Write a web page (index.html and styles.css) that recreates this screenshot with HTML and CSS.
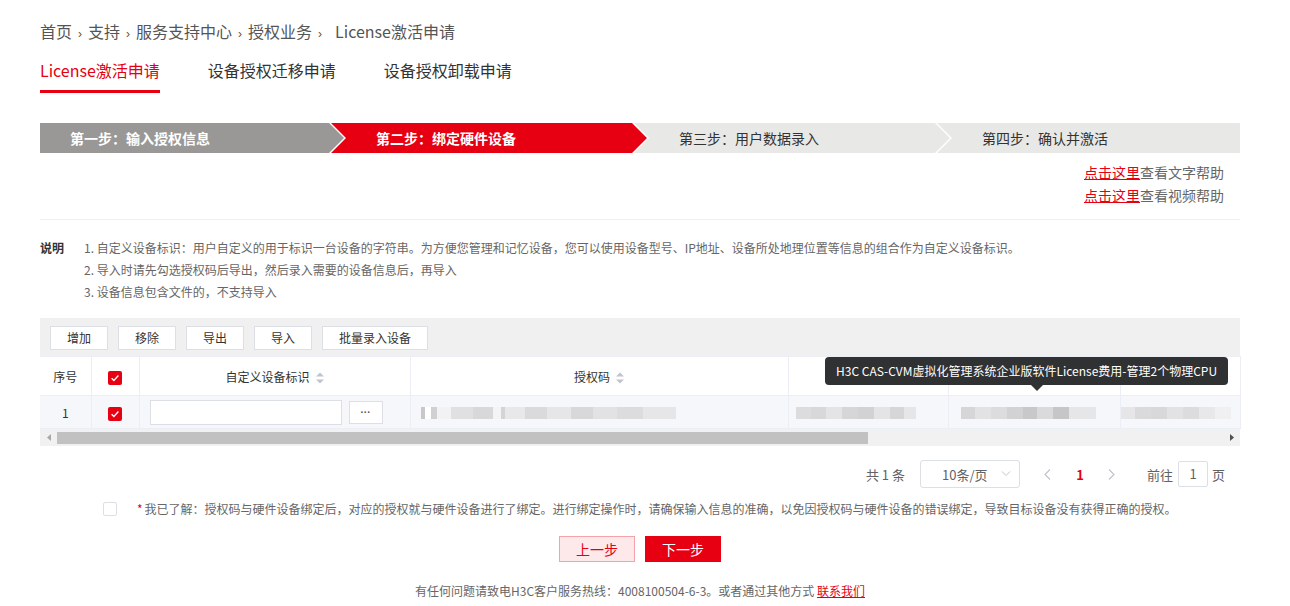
FILE: index.html
```html
<!DOCTYPE html>
<html lang="zh-CN">
<head>
    <meta charset="UTF-8">
    <title>License激活申请</title>
    <link rel="stylesheet" href="styles.css">
</head>
<body>
    <div class="page">
        <div class="crumbs">
            <a href="#">首页</a><span class="sep">›</span><a href="#">支持</a><span class="sep">›</span><a href="#">服务支持中心</a><span class="sep">›</span><a href="#">授权业务</a><span class="sep last">›</span><span>License激活申请</span>
        </div>

        <div class="tabs">
            <a class="tab active" href="#">License激活申请</a>
            <a class="tab" href="#">设备授权迁移申请</a>
            <a class="tab" href="#">设备授权卸载申请</a>
        </div>

        <div class="steps">
            <div class="step done">第一步：输入授权信息</div>
            <div class="step current">第二步：绑定硬件设备</div>
            <div class="step">第三步：用户数据录入</div>
            <div class="step">第四步：确认并激活</div>
        </div>

        <div class="help">
            <div><a href="#">点击这里</a>查看文字帮助</div>
            <div><a href="#">点击这里</a>查看视频帮助</div>
        </div>

        <div class="notes">
            <div class="notes-label">说明</div>
            <div class="notes-list">
                <div>1. 自定义设备标识：用户自定义的用于标识一台设备的字符串。为方便您管理和记忆设备，您可以使用设备型号、IP地址、设备所处地理位置等信息的组合作为自定义设备标识。</div>
                <div>2. 导入时请先勾选授权码后导出，然后录入需要的设备信息后，再导入</div>
                <div>3. 设备信息包含文件的，不支持导入</div>
            </div>
        </div>

        <div class="grid">
            <div class="toolbar">
                <button>增加</button>
                <button>移除</button>
                <button>导出</button>
                <button>导入</button>
                <button>批量录入设备</button>
            </div>

            <table class="table">
                <colgroup>
                    <col class="c-no">
                    <col class="c-check">
                    <col class="c-name">
                    <col class="c-code">
                    <col class="c-5">
                    <col class="c-6">
                    <col class="c-7">
                </colgroup>
                <thead>
                    <tr>
                        <th>序号</th>
                        <th><span class="check on"><svg viewBox="0 0 14 14" width="14" height="14"><path d="M3.6 7.2l2.3 2.3 4.5-5" fill="none" stroke="#fff" stroke-width="1.3"/></svg></span></th>
                        <th>自定义设备标识<span class="sort"><svg width="8" height="12" viewBox="0 0 8 12"><path d="M4 0.5L8 4.5H0z M4 11.5L8 7.5H0z" fill="#c0c4cc"/></svg></span></th>
                        <th>授权码<span class="sort"><svg width="8" height="12" viewBox="0 0 8 12"><path d="M4 0.5L8 4.5H0z M4 11.5L8 7.5H0z" fill="#c0c4cc"/></svg></span></th>
                        <th></th>
                        <th></th>
                        <th></th>
                    </tr>
                </thead>
                <tbody>
                    <tr>
                        <td class="center">1</td>
                        <td class="center"><span class="check on"><svg viewBox="0 0 14 14" width="14" height="14"><path d="M3.6 7.2l2.3 2.3 4.5-5" fill="none" stroke="#fff" stroke-width="1.3"/></svg></span></td>
                        <td class="name-cell"><input class="name-input" type="text"><button class="more">···</button></td>
                        <td><div class="mosaic m-code"></div></td>
                        <td><div class="mosaic m-a"></div></td>
                        <td><div class="mosaic m-b"></div></td>
                        <td class="flush"><div class="mosaic m-c"></div></td>
                    </tr>
                </tbody>
            </table>

            <div class="hscroll">
                <span class="sb-arrow left"><svg width="4" height="7" viewBox="0 0 4 7"><path d="M4 0V7L0 3.5z" fill="#a8a8a8"/></svg></span>
                <div class="sb-track"><div class="sb-thumb"></div></div>
                <span class="sb-arrow right"><svg width="4" height="7" viewBox="0 0 4 7"><path d="M0 0V7L4 3.5z" fill="#505050"/></svg></span>
            </div>

            <div class="tip">H3C CAS-CVM虚拟化管理系统企业版软件License费用-管理2个物理CPU</div>
        </div>

        <div class="pager">
            <span class="total">共 1 条</span>
            <div class="size">
                <span>10条/页</span>
                <svg width="10" height="6" viewBox="0 0 10 6"><path d="M1 0.5l4 4 4-4" fill="none" stroke="#c0c4cc" stroke-width="1"/></svg>
            </div>
            <span class="pg-btn prev"><svg width="7" height="11" viewBox="0 0 7 11"><path d="M6 0.5l-5 5 5 5" fill="none" stroke="#c0c4cc" stroke-width="1.2"/></svg></span>
            <span class="pg-btn pg-num">1</span>
            <span class="pg-btn"><svg width="7" height="11" viewBox="0 0 7 11"><path d="M1 0.5l5 5-5 5" fill="none" stroke="#c0c4cc" stroke-width="1.2"/></svg></span>
            <span class="goto">前往</span>
            <span class="pg-input">1</span>
            <span class="goto-end">页</span>
        </div>

        <div class="agree">
            <span class="box"></span>
            <span class="star">*</span>
            <span>我已了解：授权码与硬件设备绑定后，对应的授权就与硬件设备进行了绑定。进行绑定操作时，请确保输入信息的准确，以免因授权码与硬件设备的错误绑定，导致目标设备没有获得正确的授权。</span>
        </div>

        <div class="actions">
            <button class="btn btn-prev">上一步</button>
            <button class="btn btn-next">下一步</button>
        </div>

        <div class="footer">
            有任何问题请致电H3C客户服务热线：4008100504-6-3。或者通过其他方式 <a href="#">联系我们</a>
        </div>
    </div>
</body>
</html>
```

FILE: styles.css
```css
* {
    box-sizing: border-box;
}
body {
    margin: 0;
    font-family: "Noto Sans CJK SC", "Microsoft YaHei", sans-serif;
    color: #333;
    background: #fff;
}
a {
    color: inherit;
    text-decoration: none;
}
.page {
    width: 1200px;
    margin-left: 40px;
    padding-top: 19px;
}

/* breadcrumb + tabs */
.crumbs {
    height: 24px;
    font-size: 16px;
    line-height: 24px;
    color: #555;
}
.crumbs .sep {
    font-family: "Liberation Sans", sans-serif;
    font-size: 12px;
    line-height: 1;
    margin: 0 6px;
}
.crumbs .sep.last {
    margin-right: 13px;
}
.tabs {
    display: flex;
    gap: 48px;
    margin-top: 15px;
}
.tab {
    font-size: 16px;
    line-height: 24px;
    padding-bottom: 8px;
    border-bottom: 3px solid transparent;
    color: #333;
}
.tab.active {
    color: #e60012;
    border-bottom-color: #e60012;
}

/* steps */
.steps {
    display: flex;
    height: 30px;
    margin-top: 30px;
}
.step {
    flex: none;
    width: 316px;
    height: 30px;
    margin-left: -13px;
    padding-left: 45px;
    font-size: 14px;
    line-height: 30px;
    color: #333;
    background: #e8e8e6;
    clip-path: polygon(0 0, calc(100% - 15px) 0, 100% 50%, calc(100% - 15px) 100%, 0 100%, 15px 50%);
}
.step:first-child {
    width: 304px;
    margin-left: 0;
    padding-left: 30px;
    clip-path: polygon(0 0, calc(100% - 15px) 0, 100% 50%, calc(100% - 15px) 100%, 0 100%);
}
.step:last-child {
    flex: 1;
    clip-path: polygon(0 0, 100% 0, 100% 100%, 0 100%, 15px 50%);
}
.step.done {
    background: #999896;
    color: #fff;
    font-weight: bold;
}
.step.current {
    background: #e60012;
    color: #fff;
    font-weight: bold;
}

/* help */
.help {
    margin-top: 8px;
    padding: 0 16px 12px 0;
    border-bottom: 1px solid #eee;
    text-align: right;
    font-size: 14px;
    line-height: 23px;
    color: #666;
}
.help a {
    color: #e60012;
    text-decoration: underline;
}

/* notes */
.notes {
    display: flex;
    padding-top: 17px;
    font-size: 12px;
    line-height: 22px;
}
.notes-label {
    width: 44px;
    font-weight: bold;
    color: #333;
}
.notes-list {
    color: #666;
}

/* grid */
.grid {
    position: relative;
    margin-top: 15px;
}
.toolbar {
    display: flex;
    gap: 10px;
    padding: 8px 10px 6px;
    background: #f0f0f0;
}
.toolbar button {
    height: 24px;
    padding: 0 16px;
    font-family: inherit;
    font-size: 12px;
    line-height: 22px;
    color: #333;
    background: #fff;
    border: 1px solid #dcdfe6;
}
.table {
    width: 100%;
    border-collapse: collapse;
    table-layout: fixed;
    font-size: 12px;
}
.c-no { width: 51px; }
.c-check { width: 48px; }
.c-name { width: 271px; }
.c-code { width: 378px; }
.c-5 { width: 160px; }
.c-6 { width: 172px; }
.c-7 { width: 120px; }
.table th {
    height: 39px;
    padding: 0;
    font-weight: normal;
    color: #333;
    background: #fff;
    border: 1px solid #ebeef5;
}
.table td {
    height: 33px;
    padding: 0 0 0 10px;
    color: #333;
    background: #f5f7fa;
    border: 1px solid #ebeef5;
}
.table th:first-child,
.table td:first-child {
    border-left: none;
}
.table td.center {
    padding: 0;
    text-align: center;
}
.table td.flush {
    padding-left: 0;
}
.sort {
    display: inline-block;
    margin-left: 6px;
    vertical-align: -2px;
}
.sort svg {
    display: block;
}
.check {
    display: inline-block;
    width: 14px;
    height: 14px;
    border-radius: 2px;
    vertical-align: middle;
}
.check.on {
    background: #e60012;
}
.check svg {
    display: block;
}
.name-cell {
    white-space: nowrap;
}
.name-input {
    width: 192px;
    height: 25px;
    vertical-align: middle;
    border: 1px solid #dcdfe6;
    background: #fff;
    outline: none;
}
.more {
    width: 34px;
    height: 23px;
    margin-left: 7px;
    padding: 0;
    vertical-align: middle;
    font-family: "Liberation Sans", sans-serif;
    font-size: 10px;
    font-weight: bold;
    color: #555;
    background: #fff;
    border: 1px solid #dcdfe6;
}
.mosaic {
    height: 12px;
    margin-top: 2px;
    filter: blur(0.4px);
}
.m-code {
    width: 255px;
    background: linear-gradient(90deg, #c8c8ca 0 4px, #fff 4px 10px, #d0d0d2 10px 16px, #f2f2f4 16px 30px, #e0e0e2 30px 52px, #d8d8da 52px 72px, #f4f4f6 72px 80px, #d4d4d6 80px 84px, #e8e8ea 84px 104px, #dadadc 104px 126px, #e6e6e8 126px 150px, #d8d8da 150px 172px, #e2e2e4 172px 196px, #dcdcde 196px 222px, #e6e6e8 222px 255px);
}
.m-a {
    width: 120px;
    margin-left: -3px;
    background: linear-gradient(90deg, #dcdcde 0 15px, #d8d8da 15px 30px, #e4e4e6 30px 46px, #d6d6d8 46px 62px, #d2d2d4 62px 78px, #e4e4e6 78px 94px, #d6d6d8 94px 108px, #e6e6e8 108px 120px);
}
.m-b {
    width: 135px;
    margin-left: 2px;
    background: linear-gradient(90deg, #d6d6d8 0 14px, #e2e2e4 14px 30px, #dcdcde 30px 46px, #d2d2d4 46px 62px, #c8c8ca 62px 76px, #dadadc 76px 92px, #c6c6c8 92px 108px, #e6e6e8 108px 135px);
}
.m-c {
    width: 110px;
    background: linear-gradient(90deg, #e6e6e8 0 14px, #dadadc 14px 30px, #d8d8da 30px 46px, #e2e2e4 46px 62px, #dcdcde 62px 78px, #e8e8ea 78px 94px, #f0f0f2 94px 110px);
}
.hscroll {
    display: flex;
    align-items: center;
    height: 17px;
    background: #f1f1f1;
}
.sb-arrow {
    display: flex;
    justify-content: center;
    width: 17px;
}
.sb-track {
    flex: 1;
    height: 17px;
    display: flex;
    align-items: center;
}
.sb-thumb {
    width: 811px;
    height: 12px;
    background: #c1c1c1;
}
.tip {
    position: absolute;
    left: 785px;
    top: 39px;
    height: 28px;
    padding: 0 11px;
    font-size: 12px;
    line-height: 28px;
    color: #fff;
    white-space: nowrap;
    background: #303133;
    border-radius: 4px;
}
.tip::after {
    content: "";
    position: absolute;
    left: 206px;
    top: 100%;
    border: 6px solid transparent;
    border-top-color: #303133;
}

/* pager */
.pager {
    display: flex;
    justify-content: flex-end;
    align-items: center;
    height: 28px;
    margin-top: 14px;
    padding-right: 15px;
    font-size: 13px;
    color: #606266;
}
.size {
    display: flex;
    align-items: center;
    justify-content: space-between;
    width: 100px;
    height: 28px;
    margin-left: 15px;
    padding: 0 8px 0 21px;
    border: 1px solid #dcdfe6;
    border-radius: 3px;
}
.pg-btn {
    display: flex;
    align-items: center;
    justify-content: center;
    width: 32px;
    height: 28px;
}
.pg-btn.prev {
    margin-left: 12px;
}
.pg-num {
    color: #e60012;
    font-weight: bold;
}
.goto {
    margin-left: 19px;
}
.pg-input {
    width: 30px;
    height: 26px;
    margin: 0 4px 0 5px;
    line-height: 24px;
    text-align: center;
    border: 1px solid #dcdfe6;
    border-radius: 2px;
}

/* agree */
.agree {
    display: flex;
    align-items: center;
    margin-top: 11px;
    padding-left: 63px;
    font-size: 12px;
    line-height: 20px;
    color: #666;
}
.agree .box {
    width: 14px;
    height: 14px;
    margin-right: 20px;
    border: 1px solid #dcdfe6;
    border-radius: 2px;
    background: #fff;
}
.agree .star {
    color: #e60012;
    margin-right: 2px;
}

/* actions + footer */
.actions {
    display: flex;
    justify-content: center;
    gap: 10px;
    margin-top: 17px;
}
.btn {
    width: 76px;
    height: 26px;
    padding: 0;
    font-family: inherit;
    font-size: 14px;
    line-height: 24px;
    border: 1px solid;
    cursor: pointer;
}
.btn-prev {
    color: #e60012;
    background: #fde8ea;
    border-color: #f4a3ab;
}
.btn-next {
    color: #fff;
    background: #e60012;
    border-color: #e60012;
}
.footer {
    margin-top: 19px;
    text-align: center;
    font-size: 12px;
    line-height: 20px;
    color: #666;
}
.footer a {
    color: #e60012;
    text-decoration: underline;
}
```
